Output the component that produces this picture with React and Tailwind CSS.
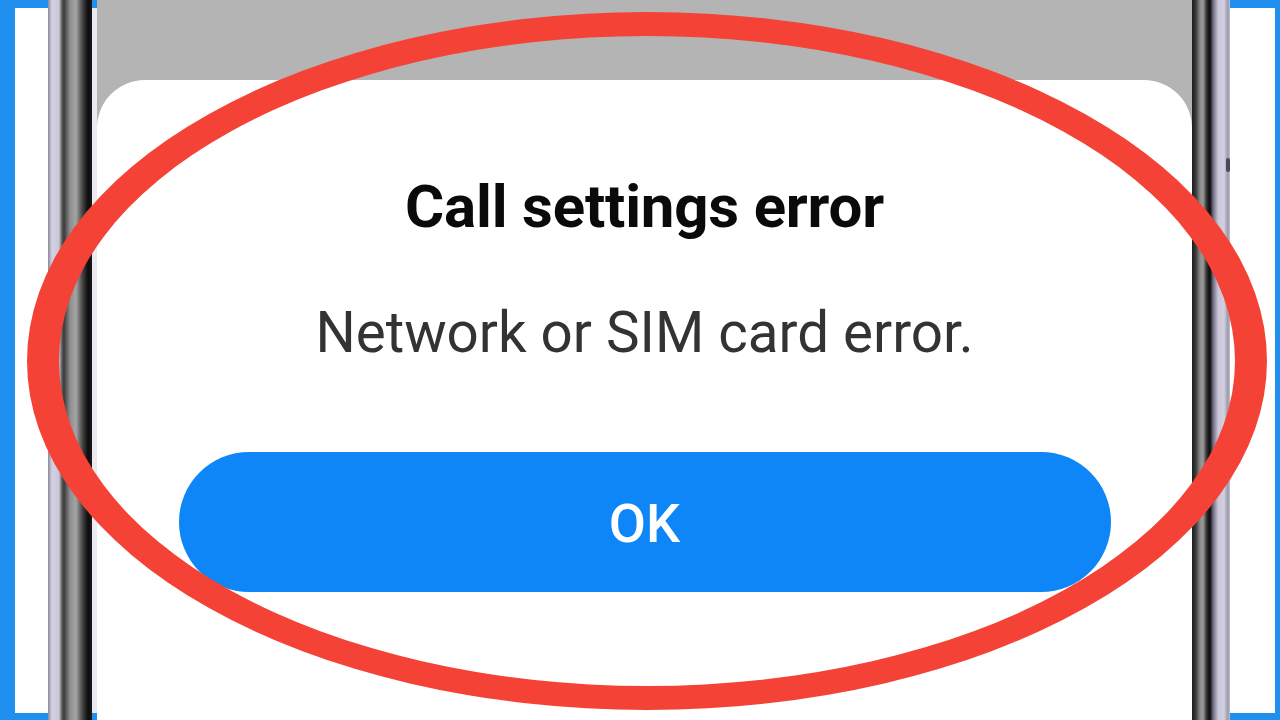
export default function App() {
  return (
    <div className="relative w-[1280px] h-[720px] overflow-hidden bg-white flex" style={{ fontFamily: 'Roboto, "Noto Sans", sans-serif' }}>
      {/* left outer area */}
      <div className="w-[48px] h-full bg-white border-l-[15px] border-t-[8px] border-b-[7px] border-[#1f8ff0]" />
      {/* left phone frame */}
      <div className="w-[44px] h-full bg-[linear-gradient(to_right,#8c889c_0px,#d4d2e2_4px,#c9c6d8_11px,#5a5a5a_14px,#3a3a3a_16px,#8e8e8e_22px,#a4a4a4_28px,#4a4a4a_34px,#0c0c0c_40px,#1a1a1a_44px)]" />
      <div className="w-[5px] h-full bg-[#eceaf0] border-t-[8px] border-b-[7px] border-[#1f8ff0]" />
      {/* screen */}
      <div className="w-[1095px] h-full flex flex-col bg-[#b4b4b4]">
        <div className="h-[80px] shrink-0" />
        <div className="flex-1 bg-white rounded-t-[48px] flex flex-col items-center">
          <div className="mt-[97px] text-[60px] leading-none font-bold text-[#0a0a0a] tracking-[-0.2px]">Call settings error</div>
          <div className="mt-[68px] text-[56.5px] leading-none text-[#333333]">Network or SIM card error.</div>
          <div className="mt-[90px] w-[932px] h-[140px] rounded-full bg-[#0e86f7] flex items-center justify-center pt-[5px]">
            <span className="text-[54px] leading-none font-medium text-white">OK</span>
          </div>
        </div>
      </div>
      {/* right phone frame */}
      <div className="relative w-[38px] h-full bg-[linear-gradient(to_right,#1c1c1c_0px,#3c3c3c_4px,#8a8a8a_8px,#9a9a9a_11px,#2a2a2a_15px,#0a0a0a_18px,#6c6880_21px,#c9c6d8_26px,#d2d0e0_32px,#9896aa_36px,#c4c2d2_38px)]">
        <div className="absolute left-[34px] top-[158px] w-[4px] h-[14px] bg-[#4a4858] rounded-sm" />
      </div>
      {/* right outer area */}
      <div className="w-[50px] h-full bg-white border-r-[5px] border-t-[8px] border-b-[7px] border-[#1f8ff0]" />

      {/* red ellipse overlay */}
      <svg className="absolute inset-0 pointer-events-none" width="1280" height="720" viewBox="0 0 1280 720">
        <path
          fillRule="evenodd"
          fill="#f44336"
          d="M27,361 A620,349 0 1,0 1267,361 A620,349 0 1,0 27,361 Z M59,361 A588,325 0 1,0 1235,361 A588,325 0 1,0 59,361 Z"
        />
      </svg>
    </div>
  );
}
